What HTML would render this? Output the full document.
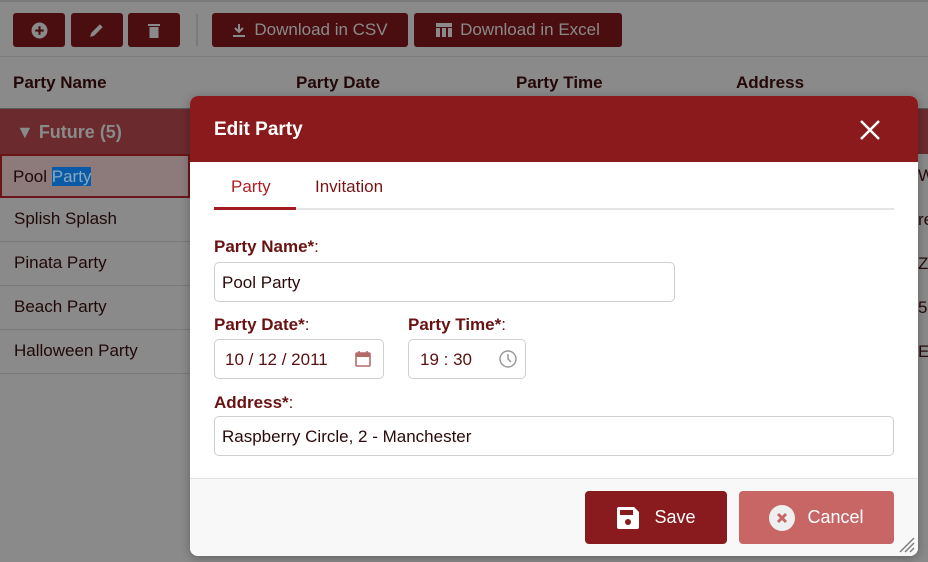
<!DOCTYPE html>
<html><head><style>
*{box-sizing:border-box;margin:0;padding:0}
body{width:928px;height:562px;overflow:hidden;background:#8a8a8a;font-family:"Comic Sans MS","Liberation Sans",sans-serif;position:relative;color:#2a0a0a}
.abs{position:absolute}
.tb{position:absolute;top:13px;height:34px;background:#4b0e10;border-radius:3px;color:#8a8a8a;font-size:17px;display:flex;align-items:center;justify-content:center;gap:8px}
.hd{position:absolute;top:73px;font-weight:bold;font-size:17px;color:#240808}
.row{position:absolute;left:0;width:190px;height:44px;border-bottom:1px solid #7a7a7a;font-size:17px;padding:11px 14px;color:#200808}
.lbl{position:absolute;font-weight:bold;font-size:17px;color:#6a1212}
.inp{position:absolute;height:40px;border:1px solid #cfcfcf;border-radius:5px;background:#fff;font-size:17px;color:#5a1010;padding:10px 7px}
</style></head><body>
<div class="abs" style="left:0;top:0;width:928px;height:2px;background:#7a7a7a"></div>
<div class="tb" style="left:13px;width:52px"><svg width="17" height="17" viewBox="0 0 16 16"><circle cx="8" cy="8" r="7.5" fill="#8a8a8a"/><path d="M8 4v8M4 8h8" stroke="#4b0e10" stroke-width="2"/></svg></div>
<div class="tb" style="left:71px;width:52px"><svg width="16" height="16" viewBox="0 0 14 14"><path d="M1 13l1-3.5 7.5-7.5 2.5 2.5-7.5 7.5z" fill="#8a8a8a"/></svg></div>
<div class="tb" style="left:128px;width:52px"><svg width="12" height="17" viewBox="0 0 12 15"><rect x="0" y="1" width="12" height="2" fill="#8a8a8a"/><rect x="1.5" y="4" width="9" height="11" fill="#8a8a8a"/></svg></div>
<div class="abs" style="left:196px;top:14px;width:2px;height:32px;background:#7a7a7a"></div>
<div class="tb" style="left:212px;width:196px"><svg width="14" height="14" viewBox="0 0 14 14"><path d="M7 1v8M3 5l4 4 4-4M1 13h12" stroke="#8a8a8a" stroke-width="2" fill="none"/></svg>Download in CSV</div>
<div class="tb" style="left:414px;width:208px"><svg width="16" height="14" viewBox="0 0 16 14"><rect x="0" y="0" width="16" height="4" fill="#8a8a8a"/><rect x="0" y="5" width="4" height="9" fill="#8a8a8a"/><rect x="6" y="5" width="4" height="9" fill="#8a8a8a"/><rect x="12" y="5" width="4" height="9" fill="#8a8a8a"/></svg>Download in Excel</div>
<div class="abs" style="left:0;top:56px;width:928px;height:1px;background:#7a7a7a"></div>
<div class="hd" style="left:13px">Party Name</div>
<div class="hd" style="left:296px">Party Date</div>
<div class="hd" style="left:516px">Party Time</div>
<div class="hd" style="left:736px">Address</div>
<div class="abs" style="left:0;top:108px;width:928px;height:46px;background:#6b2b2e;border-top:1px solid #5a5a5a"></div>
<div class="abs" style="left:16px;top:122px;font-weight:bold;font-size:18px;color:#8a8a8a">▼ Future (5)</div>
<div class="row" style="top:154px;background:#8d7b7c;border:2px solid #6a1518;padding-left:11px">Pool <span style="background:#0b5aa8;color:#8ab">Party</span></div>
<div class="row" style="top:198px">Splish Splash</div>
<div class="row" style="top:242px">Pinata Party</div>
<div class="row" style="top:286px">Beach Party</div>
<div class="row" style="top:330px">Halloween Party</div>
<div class="abs" style="left:918px;top:154px;width:10px;height:220px;font-size:17px;line-height:44px">W<br>re<br>Z<br>5<br>E</div>
<div class="abs" style="left:190px;top:96px;width:728px;height:460px;background:#fff;border-radius:8px;overflow:hidden;box-shadow:0 2px 10px rgba(0,0,0,.3)">
 <div class="abs" style="left:0;top:0;width:728px;height:66px;background:#8a1a1c"></div>
 <div class="abs" style="left:24px;top:23px;color:#fff;font-weight:bold;font-size:19px">Edit Party</div>
 <svg class="abs" style="left:669px;top:23px" width="22" height="22" viewBox="0 0 22 22"><path d="M2 2l18 18M20 2L2 20" stroke="#fff" stroke-width="2.5"/></svg>
 <div class="abs" style="left:24px;top:112px;width:680px;height:2px;background:#e4e4e4"></div>
 <div class="abs" style="left:24px;top:111px;width:82px;height:3px;background:#a31c1f"></div>
 <div class="abs" style="left:41px;top:81px;font-size:17px;color:#b01e22">Party</div>
 <div class="abs" style="left:125px;top:81px;font-size:17px;color:#7a1414">Invitation</div>
 <div class="lbl" style="left:24px;top:141px">Party Name*<span style="font-weight:normal">:</span></div>
 <div class="inp" style="left:24px;top:166px;width:461px;color:#2a0a0a">Pool Party</div>
 <div class="lbl" style="left:24px;top:219px">Party Date*<span style="font-weight:normal">:</span></div>
 <div class="lbl" style="left:218px;top:219px">Party Time*<span style="font-weight:normal">:</span></div>
 <div class="inp" style="left:24px;top:243px;width:170px;padding-left:10px">10 / 12 / 2011
  <svg class="abs" style="left:140px;top:10px" width="16" height="17" viewBox="0 0 16 17"><rect x="1" y="3" width="14" height="13" rx="1" fill="none" stroke="#b56a6a" stroke-width="1.6"/><rect x="1" y="3" width="14" height="4" fill="#b56a6a"/><path d="M4 1v3M12 1v3" stroke="#b56a6a" stroke-width="1.6"/></svg></div>
 <div class="inp" style="left:218px;top:243px;width:118px;padding-left:11px">19 : 30
  <svg class="abs" style="left:90px;top:10px" width="18" height="18" viewBox="0 0 18 18"><circle cx="9" cy="9" r="8" fill="none" stroke="#999" stroke-width="1.5"/><path d="M9 4v5l3 3" fill="none" stroke="#999" stroke-width="1.5"/></svg></div>
 <div class="lbl" style="left:24px;top:297px">Address*<span style="font-weight:normal">:</span></div>
 <div class="inp" style="left:24px;top:320px;width:680px;color:#2a0a0a">Raspberry Circle, 2 - Manchester</div>
 <div class="abs" style="left:0;top:382px;width:728px;height:78px;background:#f8f8f8;border-top:1px solid #e4e4e4"></div>
 <div class="abs" style="left:395px;top:395px;width:142px;height:53px;background:#891a1d;border-radius:4px;color:#fff;font-size:18px;display:flex;align-items:center;justify-content:center;gap:14px"><svg width="24" height="24" viewBox="0 0 24 24"><path d="M1 3a2 2 0 012-2h15l5 5v15a2 2 0 01-2 2H3a2 2 0 01-2-2z" fill="#fff"/><rect x="4" y="4" width="13" height="5" fill="#891a1d"/><circle cx="12" cy="16" r="3" fill="#891a1d"/></svg>Save</div>
 <div class="abs" style="left:549px;top:395px;width:155px;height:53px;background:#c86666;border-radius:4px;color:#fff;font-size:18px;display:flex;align-items:center;justify-content:center;gap:12px"><svg width="26" height="26" viewBox="0 0 26 26"><circle cx="13" cy="13" r="13" fill="#eef0f0"/><path d="M9 9l8 8M17 9l-8 8" stroke="#c86666" stroke-width="3"/></svg>Cancel</div>
 <svg class="abs" style="left:704px;top:436px" width="22" height="22" viewBox="0 0 22 22"><path d="M20 6L6 20M20 11L11 20M20 16L16 20" stroke="#777" stroke-width="1.3"/></svg>
</div>
</body></html>
